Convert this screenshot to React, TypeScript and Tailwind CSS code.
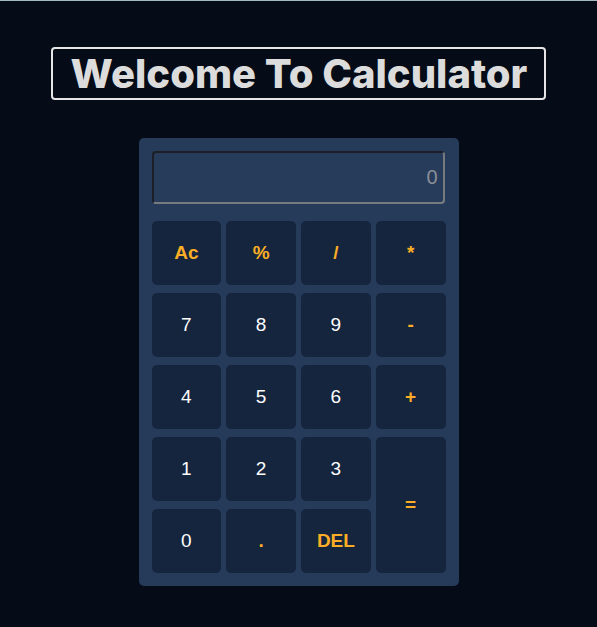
import React, { useState } from "react";

type KeyType = {
  label: string,
  accent?: boolean,
  tall?: boolean,
}

const keys: Array<KeyType> = [
  { label: "Ac", accent: true },
  { label: "%", accent: true },
  { label: "/", accent: true },
  { label: "*", accent: true },
  { label: "7" },
  { label: "8" },
  { label: "9" },
  { label: "-", accent: true },
  { label: "4" },
  { label: "5" },
  { label: "6" },
  { label: "+", accent: true },
  { label: "1" },
  { label: "2" },
  { label: "3" },
  { label: "=", accent: true, tall: true },
  { label: "0" },
  { label: ".", accent: true },
  { label: "DEL", accent: true },
];

const App = () => {
  const [value, setValue] = useState("");

  const handleKey = (label: string) => {
    if (label === "Ac") return setValue("");
    if (label === "DEL") return setValue(value.slice(0, -1));
    if (label === "=") {
      try {
        // eslint-disable-next-line no-new-func
        setValue(String(Function(`return (${value})`)()));
      } catch {
        setValue("");
      }
      return;
    }
    setValue(value + label);
  };

  return (
    <div className="min-h-[627px] w-full border-t border-[#a3babd] bg-[#050c18] flex flex-col items-center pt-[46px] font-['Liberation_Sans',Arial,sans-serif]">
      <h1 className="rounded-[4px] border-2 border-[#e6e6e6] pl-[18px] pr-[17px] h-[53px] flex items-center text-[40px] font-extrabold leading-none text-[#dcdcdc] font-['Inter',sans-serif]">
        Welcome To Calculator
      </h1>

      <div className="mt-[38px] w-[320px] rounded-[5px] bg-[#263a59] p-[13px]">
        <input
          readOnly
          value={value}
          placeholder="0"
          className="block h-[53px] w-[293px] rounded-[4px] border-2 border-t-[#1c1f26] border-l-[#1c1f26] border-b-[#777b80] border-r-[#777b80] bg-[#273b5b] pl-2 pr-[5px] text-right text-[20px] text-white placeholder:text-[#8a8f96] outline-none"
        />

        <div className="mt-[17px] grid grid-cols-4 auto-rows-[64px] gap-x-[5px] gap-y-2">
          {keys.map((item) => (
            <button
              key={item.label}
              onClick={() => handleKey(item.label)}
              className={`rounded-[5px] bg-[#15253e] text-[19px] ${item.tall ? "row-span-2" : ""} ${item.accent ? "font-bold text-[#fbae25]" : "text-white"}`}
            >
              {item.label}
            </button>
          ))}
        </div>
      </div>
    </div>
  );
};

export default App;
